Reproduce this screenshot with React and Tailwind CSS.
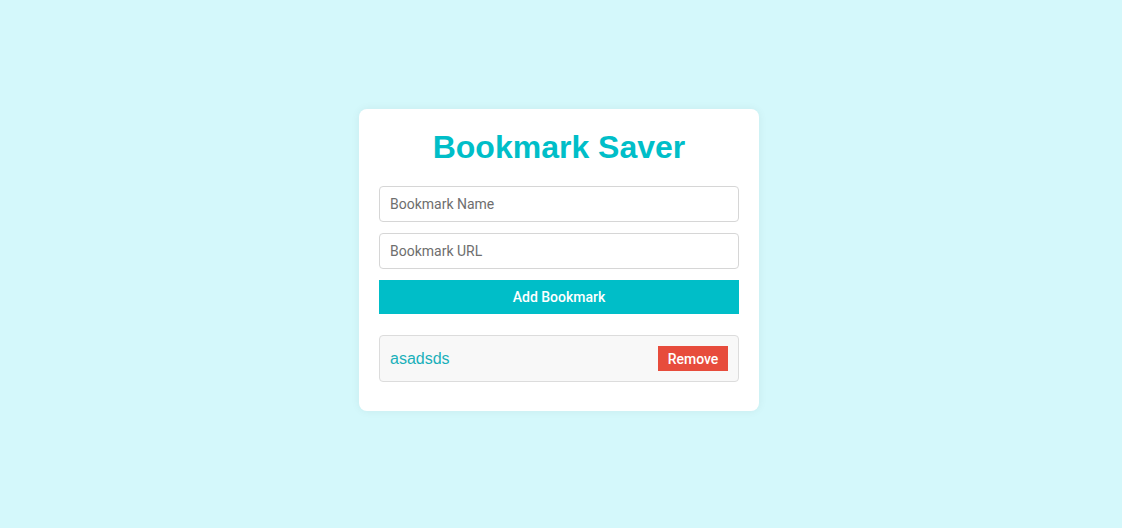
import { useState } from 'react';

export default function App() {
  const [name, setName] = useState('');
  const [url, setUrl] = useState('');
  const [bookmarks, setBookmarks] = useState([{ name: 'asadsds', url: '#' }]);

  function addBookmark() {
    if (!name || !url) return;
    setBookmarks([...bookmarks, { name, url }]);
    setName('');
    setUrl('');
  }

  return (
    <div className="min-h-screen bg-[#d4f8fb] flex items-center justify-center pb-[8px] pr-1 font-['Liberation_Sans',Arial,sans-serif]">
      <div className="w-[400px] bg-white rounded-lg shadow-[0_0_10px_rgba(0,0,0,0.06)] px-5 pt-5 pb-[19px]">
        <h1 className="text-[32px] leading-[37px] font-bold text-[#00bec8] text-center mb-5">
          Bookmark Saver
        </h1>

        <input
          value={name}
          onChange={e => setName(e.target.value)}
          placeholder="Bookmark Name"
          className="block w-full h-9 border border-[#d6d6d6] rounded px-[10px] font-['Roboto',sans-serif] text-sm text-gray-800 placeholder:text-[#6e6e6e] mb-[11px] outline-none"
        />
        <input
          value={url}
          onChange={e => setUrl(e.target.value)}
          placeholder="Bookmark URL"
          className="block w-full h-9 border border-[#d6d6d6] rounded px-[10px] font-['Roboto',sans-serif] text-sm text-gray-800 placeholder:text-[#6e6e6e] mb-[11px] outline-none"
        />
        <button
          onClick={addBookmark}
          className="block w-full h-[34px] bg-[#00bec8] text-white font-['Roboto',sans-serif] text-sm font-medium"
        >
          Add Bookmark
        </button>

        {/* Bookmark list */}
        <ul className="mt-[21px]">
          {bookmarks.map((b, i) => (
            <li
              key={i}
              className="flex items-center justify-between h-[47px] bg-[#f8f8f8] border border-[#dcdcdc] rounded px-[10px] mb-[10px]"
            >
              <a href={b.url} className="text-[#1ab0ba] text-base">{b.name}</a>
              <button
                onClick={() => setBookmarks(bookmarks.filter((_, j) => j !== i))}
                className="bg-[#e74c3c] text-white font-['Roboto',sans-serif] text-sm font-medium w-[70px] h-[25px]"
              >
                Remove
              </button>
            </li>
          ))}
        </ul>
      </div>
    </div>
  );
}
